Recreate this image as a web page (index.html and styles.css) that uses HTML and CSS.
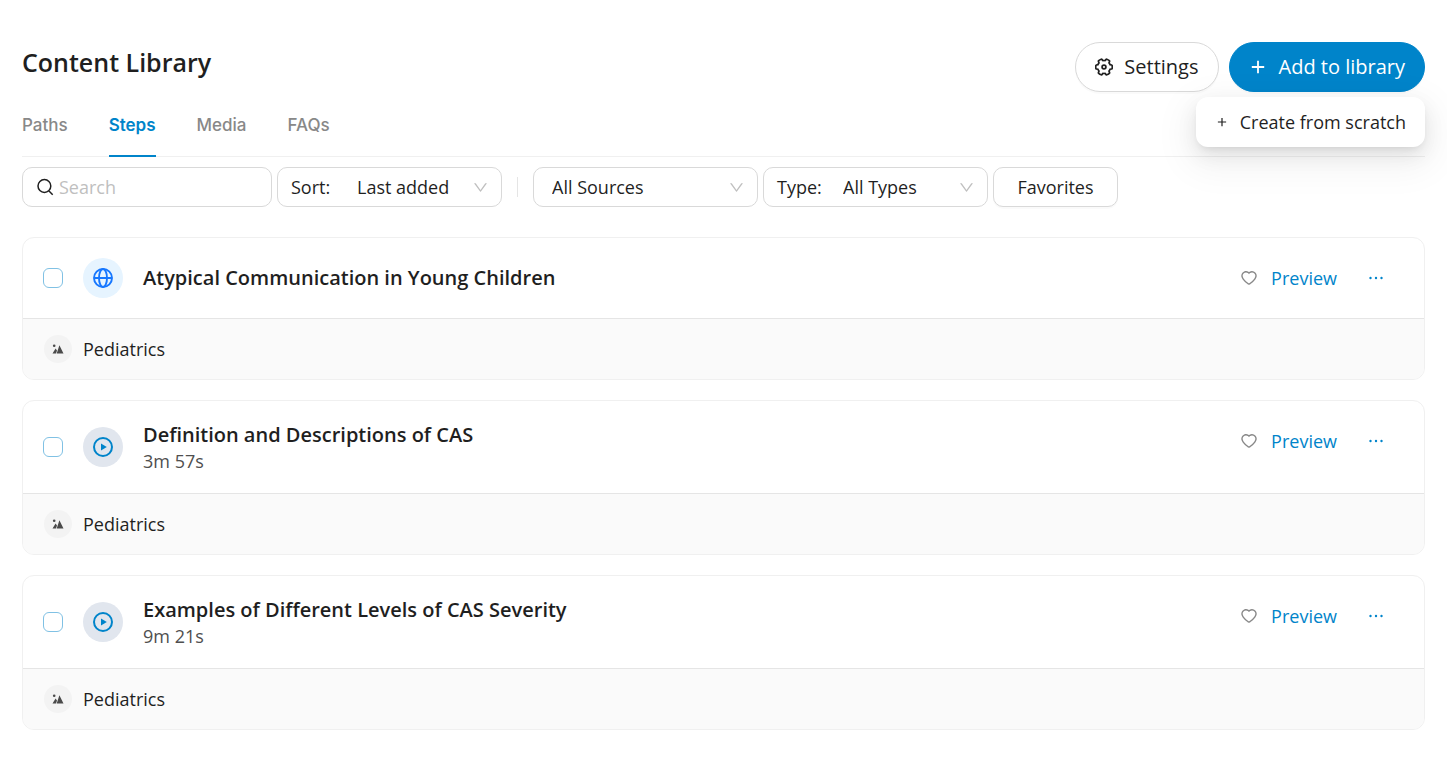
FILE: index.html
```html
<!DOCTYPE html>
<html lang="en">
<head>
    <meta charset="UTF-8">
    <meta name="viewport" content="width=device-width, initial-scale=1.0">
    <title>Content Library</title>
    <link rel="stylesheet" href="styles.css">
</head>
<body>

    <!-- Shared icons -->
    <svg class="sprite" aria-hidden="true">
        <symbol id="icon-search" viewBox="0 0 18 18">
            <path d="M12.5 12.5l4.2 4.2M14.8 8A6.4 6.4 0 1 1 2 8a6.4 6.4 0 0 1 12.8 0z" fill="none" stroke="currentColor" stroke-width="1.5"/>
        </symbol>
        <symbol id="icon-down" viewBox="64 64 896 896">
            <path d="M884 256h-75c-5.1 0-9.9 2.5-12.9 6.6L512 654.2 227.9 262.6c-3-4.1-7.8-6.6-12.9-6.6h-75c-6.5 0-10.3 7.4-6.5 12.7l352.6 486.1c12.8 17.6 39 17.6 51.7 0l352.6-486.1c3.9-5.3.1-12.7-6.4-12.7z"/>
        </symbol>
        <symbol id="icon-plus" viewBox="0 0 16 16">
            <path d="M8 2.5v11M2.5 8h11" fill="none" stroke="currentColor" stroke-width="1.6"/>
        </symbol>
        <symbol id="icon-heart" viewBox="64 64 896 896">
            <path d="M923 283.6a260.04 260.04 0 00-56.9-82.8 264.4 264.4 0 00-84-55.5A265.34 265.34 0 00679.7 125c-49.3 0-97.4 13.5-139.2 39-10 6.1-19.5 12.8-28.5 20.1-9-7.3-18.5-14-28.5-20.1-41.8-25.5-89.9-39-139.2-39-35.5 0-69.9 6.8-102.4 20.3-31.4 13-59.7 31.7-84 55.5a258.44 258.44 0 00-56.9 82.8c-13.9 32.3-21 66.6-21 101.9 0 33.3 6.8 68 20.3 103.3 11.3 29.5 27.5 60.1 48.2 91 32.8 48.9 77.9 99.9 133.9 151.6 92.8 85.7 184.7 144.9 188.6 147.3l23.7 15.2c10.5 6.7 24 6.7 34.5 0l23.7-15.2c3.9-2.5 95.7-61.6 188.6-147.3 56-51.7 101.1-102.7 133.9-151.6 20.7-30.9 37-61.5 48.2-91 13.5-35.3 20.3-70 20.3-103.3.1-35.3-7-69.6-20.9-101.9zM512 814.8S156 586.7 156 385.5C156 283.6 240.3 201 344.3 201c73.1 0 136.5 40.8 167.7 100.4C543.2 241.8 606.6 201 679.7 201c104 0 188.3 82.6 188.3 184.5 0 201.2-356 429.3-356 429.3z"/>
        </symbol>
        <symbol id="icon-more" viewBox="0 0 16 16">
            <circle cx="2.5" cy="8" r="1.2"/><circle cx="8" cy="8" r="1.2"/><circle cx="13.5" cy="8" r="1.2"/>
        </symbol>
        <symbol id="icon-globe" viewBox="0 0 20 20">
            <g fill="none" stroke="currentColor" stroke-width="1.9">
                <circle cx="10" cy="10" r="9"/><ellipse cx="10" cy="10" rx="4" ry="9"/><path d="M1 10h18"/>
            </g>
        </symbol>
        <symbol id="icon-play" viewBox="0 0 20 20">
            <circle cx="10" cy="10" r="9" fill="none" stroke="currentColor" stroke-width="2"/><path d="M8 6.4l5.8 3.6L8 13.6z"/>
        </symbol>
        <symbol id="icon-picture" viewBox="0 0 12 12">
            <circle cx="2.2" cy="2.8" r="1.3"/><path d="M.5 10.5L3.6 5.6 5 7.6l-1 2.9zM4.7 10.5L7.4 2.2l4.1 8.3z"/>
        </symbol>
    </svg>

    <main class="page">
        <header class="header">
            <h1 class="title">Content Library</h1>
            <div class="actions">
                <button type="button" class="btn">
                    <svg class="icon-settings" viewBox="64 64 896 896" aria-hidden="true">
                        <g transform="rotate(90 512 512)" fill="none" stroke="currentColor">
                            <path transform="translate(41 41) scale(.92)" stroke-width="92" d="M924.8 625.7l-65.5-56c3.1-19 4.7-38.4 4.7-57.8s-1.6-38.8-4.7-57.8l65.5-56a32.03 32.03 0 009.3-35.2l-.9-2.6a443.74 443.74 0 00-79.7-137.9l-1.8-2.1a32.12 32.12 0 00-35.1-9.5l-81.3 28.9c-30-24.6-63.5-44-99.7-57.6l-15.7-85a32.05 32.05 0 00-25.8-25.7l-2.7-.5c-52.1-9.4-106.9-9.4-159 0l-2.7.5a32.05 32.05 0 00-25.8 25.7l-15.8 85.4a351.86 351.86 0 00-99 57.4l-81.9-29.1a32 32 0 00-35.1 9.5l-1.8 2.1a446.02 446.02 0 00-79.7 137.9l-.9 2.6c-4.5 12.5-.8 26.5 9.3 35.2l66.3 56.6c-3.1 18.8-4.6 38-4.6 57.1 0 19.2 1.5 38.4 4.6 57.1L99 625.5a32.03 32.03 0 00-9.3 35.2l.9 2.6c18.1 50.4 44.9 96.9 79.7 137.9l1.8 2.1a32.12 32.12 0 0035.1 9.5l81.9-29.1c29.8 24.5 63.1 43.9 99 57.4l15.8 85.4a32.05 32.05 0 0025.8 25.7l2.7.5a449.4 449.4 0 00159 0l2.7-.5a32.05 32.05 0 0025.8-25.7l15.7-85a350 350 0 0099.7-57.6l81.3 28.9a32 32 0 0035.1-9.5l1.8-2.1c34.8-41.1 61.6-87.5 79.7-137.9l.9-2.6c4.5-12.3.8-26.3-9.3-35z"/>
                            <circle cx="512" cy="512" r="96" stroke-width="84"/>
                        </g>
                    </svg>
                    Settings
                </button>
                <div class="dropdown">
                    <button type="button" class="btn btn-primary" aria-haspopup="true" aria-expanded="true">
                        <svg class="icon-plus" aria-hidden="true"><use href="#icon-plus"/></svg>
                        Add to library
                    </button>
                    <div class="menu">
                        <button type="button" class="menu-item">
                            <svg class="icon-small" aria-hidden="true"><use href="#icon-plus"/></svg>
                            Create from scratch
                        </button>
                    </div>
                </div>
            </div>
        </header>

        <nav class="tabs">
            <a href="#paths" class="tab">Paths</a>
            <a href="#steps" class="tab active" aria-current="page">Steps</a>
            <a href="#media" class="tab">Media</a>
            <a href="#faqs" class="tab">FAQs</a>
        </nav>

        <div class="filters">
            <div class="field search">
                <svg class="icon-search" aria-hidden="true"><use href="#icon-search"/></svg>
                <input type="text" placeholder="Search" aria-label="Search">
            </div>
            <div class="field">
                <label for="sort">Sort:</label>
                <select id="sort"><option>Last added</option></select>
                <svg class="arrow" aria-hidden="true"><use href="#icon-down"/></svg>
            </div>
            <span class="divider"></span>
            <div class="field field-plain">
                <select aria-label="Source"><option>All Sources</option></select>
                <svg class="arrow" aria-hidden="true"><use href="#icon-down"/></svg>
            </div>
            <div class="field">
                <label for="type">Type:</label>
                <select id="type"><option>All Types</option></select>
                <svg class="arrow" aria-hidden="true"><use href="#icon-down"/></svg>
            </div>
            <button type="button" class="favorites">Favorites</button>
        </div>

        <div class="list">
            <article class="card">
                <div class="card-main">
                    <input type="checkbox" class="check" aria-label="Select Atypical Communication in Young Children">
                    <span class="badge badge-web"><svg aria-hidden="true"><use href="#icon-globe"/></svg></span>
                    <div class="info">
                        <h2>Atypical Communication in Young Children</h2>
                    </div>
                    <div class="card-actions">
                        <button type="button" class="like" aria-label="Favorite"><svg aria-hidden="true"><use href="#icon-heart"/></svg></button>
                        <a href="#preview" class="preview">Preview</a>
                        <button type="button" class="more" aria-label="More"><svg aria-hidden="true"><use href="#icon-more"/></svg></button>
                    </div>
                </div>
                <div class="card-footer">
                    <span class="avatar"><svg aria-hidden="true"><use href="#icon-picture"/></svg></span>
                    Pediatrics
                </div>
            </article>

            <article class="card">
                <div class="card-main">
                    <input type="checkbox" class="check" aria-label="Select Definition and Descriptions of CAS">
                    <span class="badge"><svg aria-hidden="true"><use href="#icon-play"/></svg></span>
                    <div class="info">
                        <h2>Definition and Descriptions of CAS</h2>
                        <p>3m 57s</p>
                    </div>
                    <div class="card-actions">
                        <button type="button" class="like" aria-label="Favorite"><svg aria-hidden="true"><use href="#icon-heart"/></svg></button>
                        <a href="#preview" class="preview">Preview</a>
                        <button type="button" class="more" aria-label="More"><svg aria-hidden="true"><use href="#icon-more"/></svg></button>
                    </div>
                </div>
                <div class="card-footer">
                    <span class="avatar"><svg aria-hidden="true"><use href="#icon-picture"/></svg></span>
                    Pediatrics
                </div>
            </article>

            <article class="card">
                <div class="card-main">
                    <input type="checkbox" class="check" aria-label="Select Examples of Different Levels of CAS Severity">
                    <span class="badge"><svg aria-hidden="true"><use href="#icon-play"/></svg></span>
                    <div class="info">
                        <h2>Examples of Different Levels of CAS Severity</h2>
                        <p>9m 21s</p>
                    </div>
                    <div class="card-actions">
                        <button type="button" class="like" aria-label="Favorite"><svg aria-hidden="true"><use href="#icon-heart"/></svg></button>
                        <a href="#preview" class="preview">Preview</a>
                        <button type="button" class="more" aria-label="More"><svg aria-hidden="true"><use href="#icon-more"/></svg></button>
                    </div>
                </div>
                <div class="card-footer">
                    <span class="avatar"><svg aria-hidden="true"><use href="#icon-picture"/></svg></span>
                    Pediatrics
                </div>
            </article>
        </div>
    </main>

</body>
</html>
```
FILE: styles.css
```css
* {
    box-sizing: border-box;
}

body {
    margin: 0;
    background-color: #fff;
    color: #1f1f1f;
    font-family: "Open Sans", "Noto Sans", sans-serif;
    font-size: 18px;
    line-height: 28px;
}

button, input, select {
    font: inherit;
    color: inherit;
}

button {
    cursor: pointer;
}

svg {
    display: block;
    flex: none;
    fill: currentColor;
}

.sprite {
    display: none;
}

.page {
    padding: 42px 22px;
}

/* Header */
.header {
    display: flex;
    justify-content: space-between;
    align-items: flex-start;
}

.title {
    margin: 0;
    font-size: 25px;
    font-weight: 600;
    line-height: 40px;
}

.actions {
    display: flex;
    gap: 10px;
}

.btn {
    display: flex;
    align-items: center;
    gap: 11px;
    height: 50px;
    padding: 0 19px;
    border: 1px solid #d9d9d9;
    border-radius: 25px;
    background-color: #fff;
    font-size: 20px;
    box-shadow: 0 2px 0 rgba(0, 0, 0, 0.02);
}

.btn-primary {
    gap: 12px;
    border-color: #0084ca;
    background-color: #0084ca;
    color: #fff;
}

.icon-settings, .icon-plus {
    width: 18px;
    height: 18px;
}

.dropdown {
    position: relative;
}

.menu {
    position: absolute;
    top: 55px;
    right: 0;
    padding: 5px;
    border-radius: 12px;
    background-color: #fff;
    box-shadow: 0 8px 20px rgba(0, 0, 0, 0.08), 0 4px 8px -4px rgba(0, 0, 0, 0.12), 0 12px 36px 10px rgba(0, 0, 0, 0.05);
}

.menu-item {
    display: flex;
    align-items: center;
    gap: 12px;
    height: 40px;
    padding: 0 14px 0 15px;
    border: none;
    background: none;
    white-space: nowrap;
}

.icon-small {
    width: 12px;
    height: 12px;
}

/* Tabs */
.tabs {
    display: flex;
    gap: 41px;
    border-bottom: 1px solid #f0f0f0;
    font-family: Inter, Roboto, sans-serif;
    font-size: 17px;
    font-weight: 500;
}

.tab {
    margin-bottom: -1px;
    padding: 19px 0 16px;
    border-bottom: 2px solid transparent;
    color: #888;
    text-decoration: none;
}

.tab.active {
    border-color: #0084ca;
    color: #0084ca;
    font-weight: 600;
}

/* Filters */
.filters {
    display: flex;
    align-items: center;
    gap: 5px;
    margin-top: 10px;
}

.field {
    display: flex;
    align-items: center;
    width: 225px;
    height: 40px;
    padding: 0 13px;
    border: 1px solid #d9d9d9;
    border-radius: 10px;
    background-color: #fff;
}

.field label {
    width: 48px;
}

.field-plain {
    padding-left: 0;
}

.field select {
    flex: 1;
    min-width: 0;
    padding: 0 0 0 18px;
    border: none;
    background: none;
    appearance: none;
    outline: none;
}

.field input {
    flex: 1;
    min-width: 0;
    padding: 0;
    border: none;
    outline: none;
}

.field input::placeholder {
    color: #bfbfbf;
}

.search {
    gap: 5px;
    width: 250px;
}

.icon-search {
    width: 18px;
    height: 18px;
}

.arrow {
    width: 15px;
    height: 15px;
    color: #bfbfbf;
}

.divider {
    width: 1px;
    height: 20px;
    margin: 0 10px;
    background-color: #e5e5e5;
}

.favorites {
    width: 125px;
    height: 40px;
    padding: 0;
    border: 1px solid #d9d9d9;
    border-radius: 10px;
    background-color: #fff;
    box-shadow: 0 2px 0 rgba(0, 0, 0, 0.02);
}

/* Cards */
.list {
    display: flex;
    flex-direction: column;
    gap: 20px;
    margin-top: 30px;
}

.card {
    border: 1px solid #f0f0f0;
    border-radius: 12px;
    overflow: hidden;
}

.card-main {
    display: flex;
    align-items: center;
    gap: 20px;
    padding: 20px;
}

.check {
    flex: none;
    width: 20px;
    height: 20px;
    margin: 0;
    border: 1px solid #80c1e4;
    border-radius: 6px;
    background-color: #fff;
    appearance: none;
}

.check:checked {
    background-color: #0084ca;
}

.badge {
    display: grid;
    place-items: center;
    flex: none;
    width: 40px;
    height: 40px;
    border-radius: 50%;
    background-color: #e1e6ee;
    color: #0084ca;
}

.badge svg {
    width: 20px;
    height: 20px;
}

.badge-web {
    background-color: #e6f4ff;
    color: #1677ff;
}

.info {
    flex: 1;
}

.info h2 {
    margin: 0;
    font-size: 20px;
    font-weight: 600;
    line-height: 28px;
}

.info p {
    margin: 0;
    color: #4f4f4f;
    line-height: 24px;
}

.card-actions {
    display: flex;
    align-items: center;
    align-self: flex-start;
    height: 40px;
    padding-right: 20px;
}

.like, .more {
    padding: 0;
    border: none;
    background: none;
}

.like {
    margin-right: 14px;
    color: #888;
}

.more {
    margin-left: 31px;
    color: #0084ca;
}

.like svg, .more svg {
    width: 16px;
    height: 16px;
}

.preview {
    color: #0084ca;
    text-decoration: none;
}

.card-footer {
    display: flex;
    align-items: center;
    gap: 11px;
    height: 61px;
    padding: 0 21px;
    border-top: 1px solid #e5e5e5;
    background-color: #fafafa;
}

.avatar {
    display: grid;
    place-items: center;
    width: 28px;
    height: 28px;
    border-radius: 50%;
    background-color: #f3f3f3;
    color: #4a4a4a;
}

.avatar svg {
    width: 12px;
    height: 12px;
}
```
